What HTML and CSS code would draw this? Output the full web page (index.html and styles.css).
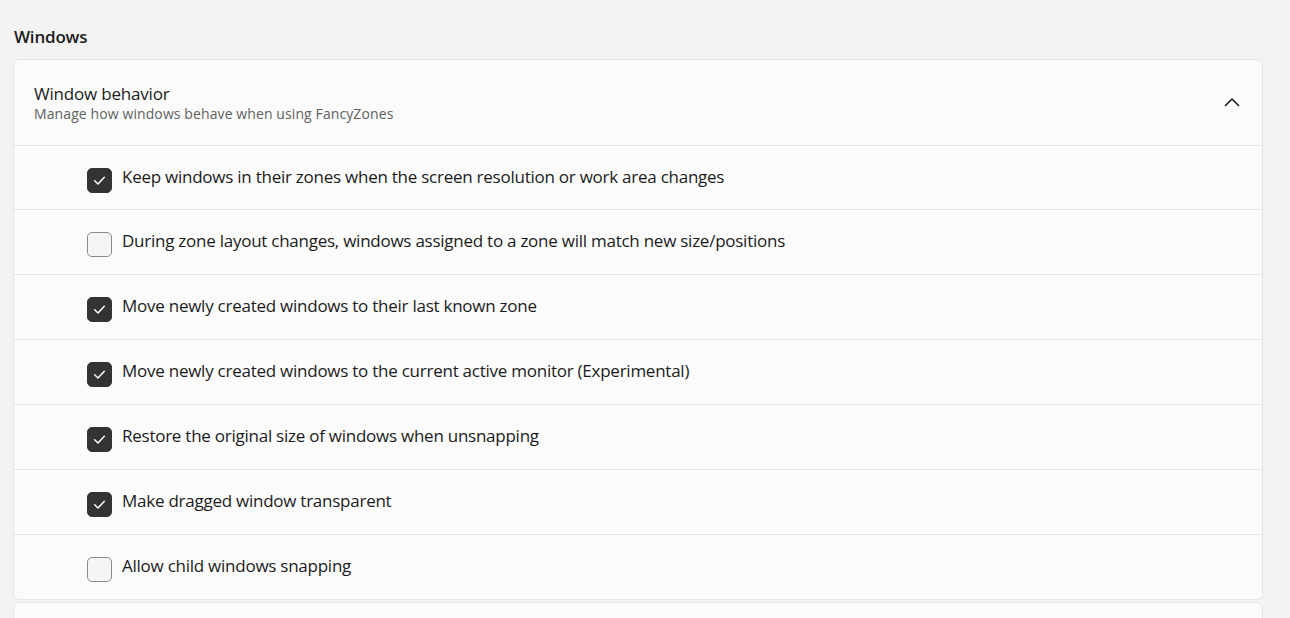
FILE: index.html
```html
<!DOCTYPE html>
<html>
<head>
<meta charset="utf-8">
<link rel="stylesheet" href="styles.css">
</head>
<body>
<div class="page">
  <h2 class="section-title">Windows</h2>
  <div class="card">
    <div class="card-header">
      <div class="header-text">
        <div class="header-title">Window behavior</div>
        <div class="header-sub">Manage how windows behave when using FancyZones</div>
      </div>
      <svg class="chevron" width="16" height="10" viewBox="0 0 16 10"><path d="M1.5 8.5 L8 2 L14.5 8.5" fill="none" stroke="#1b1b1b" stroke-width="1.6" stroke-linecap="round" stroke-linejoin="round"/></svg>
    </div>
    <div class="row"><span class="cb checked"><svg width="15" height="15" viewBox="0 0 14 14"><path d="M2.5 7.3 L5.6 10.2 L11.5 4" fill="none" stroke="#fff" stroke-width="1.4" stroke-linecap="round" stroke-linejoin="round"/></svg></span><span class="label">Keep windows in their zones when the screen resolution or work area changes</span></div>
    <div class="row"><span class="cb"></span><span class="label">During zone layout changes, windows assigned to a zone will match new size/positions</span></div>
    <div class="row"><span class="cb checked"><svg width="15" height="15" viewBox="0 0 14 14"><path d="M2.5 7.3 L5.6 10.2 L11.5 4" fill="none" stroke="#fff" stroke-width="1.4" stroke-linecap="round" stroke-linejoin="round"/></svg></span><span class="label">Move newly created windows to their last known zone</span></div>
    <div class="row"><span class="cb checked"><svg width="15" height="15" viewBox="0 0 14 14"><path d="M2.5 7.3 L5.6 10.2 L11.5 4" fill="none" stroke="#fff" stroke-width="1.4" stroke-linecap="round" stroke-linejoin="round"/></svg></span><span class="label">Move newly created windows to the current active monitor (Experimental)</span></div>
    <div class="row"><span class="cb checked"><svg width="15" height="15" viewBox="0 0 14 14"><path d="M2.5 7.3 L5.6 10.2 L11.5 4" fill="none" stroke="#fff" stroke-width="1.4" stroke-linecap="round" stroke-linejoin="round"/></svg></span><span class="label">Restore the original size of windows when unsnapping</span></div>
    <div class="row"><span class="cb checked"><svg width="15" height="15" viewBox="0 0 14 14"><path d="M2.5 7.3 L5.6 10.2 L11.5 4" fill="none" stroke="#fff" stroke-width="1.4" stroke-linecap="round" stroke-linejoin="round"/></svg></span><span class="label">Make dragged window transparent</span></div>
    <div class="row"><span class="cb"></span><span class="label">Allow child windows snapping</span></div>
  </div>
  <div class="card next"></div>
</div>
</body>
</html>
```
FILE: styles.css
```css
* { box-sizing: border-box; }
html, body { margin: 0; padding: 0; }
body {
  background: #f3f3f3;
  font-family: "Open Sans", "Noto Sans", sans-serif;
  color: #1b1b1b;
  width: 1290px;
  height: 618px;
  overflow: hidden;
}
.page {
  padding: 25px 28px 0 13px;
}
.section-title {
  margin: 0 0 11px 1px;
  font-size: 17px;
  font-weight: 600;
  line-height: 23px;
  letter-spacing: -0.2px;
}
.card {
  background: #fbfbfb;
  border: 1px solid #e5e5e5;
  border-radius: 6px;
  width: 1250px;
}
.card-header {
  height: 86px;
  display: flex;
  align-items: center;
  justify-content: space-between;
  padding: 0 22px 0 20px;
  border-bottom: 1px solid #e5e5e5;
}
.header-text { display: flex; flex-direction: column; margin-top: -1px; }
.header-title {
  font-size: 17px;
  line-height: 22px;
  letter-spacing: -0.2px;
}
.header-sub {
  font-size: 14px;
  line-height: 17px;
  color: #616161;
  letter-spacing: 0.1px;
}
.chevron { margin-top: -2px; }
.row {
  height: 65px;
  display: flex;
  align-items: center;
  padding-left: 73px;
  border-bottom: 1px solid #e5e5e5;
}
.card-header + .row { height: 64px; }
.row:last-child { border-bottom: none; height: 64px; }
.cb {
  width: 25px;
  height: 25px;
  border-radius: 5px;
  border: 1px solid #8a8a8a;
  background: #f5f5f5;
  display: flex;
  align-items: center;
  justify-content: center;
  margin-top: 5px;
  flex: none;
}
.cb.checked {
  background: #333333;
  border-color: #333333;
}
.label {
  margin-left: 10px;
  font-size: 17px;
  letter-spacing: -0.25px;
  margin-top: -3px;
}
.next {
  margin-top: 2px;
  height: 40px;
}
```
